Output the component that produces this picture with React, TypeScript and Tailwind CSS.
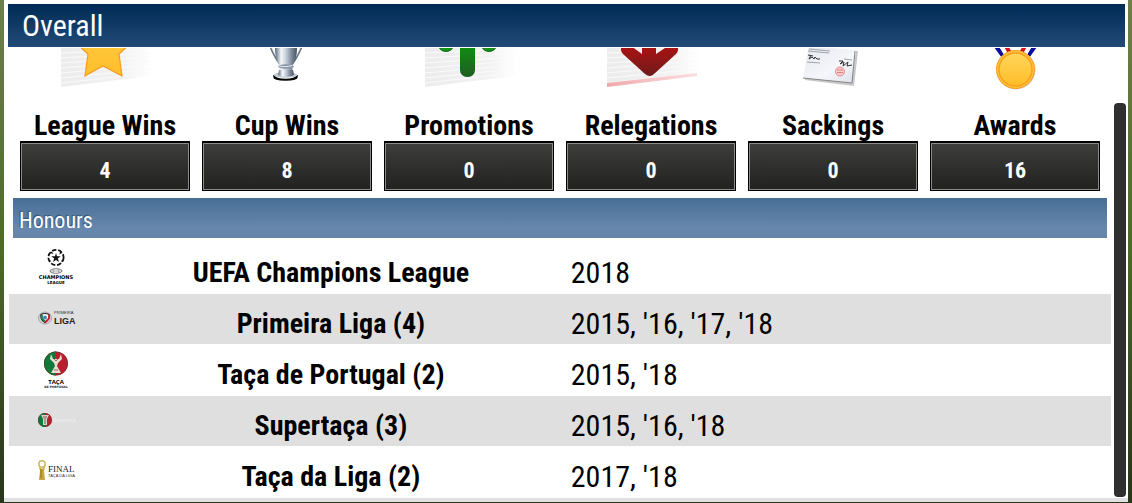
import type { ReactNode } from "react";

interface Stat {
  label: string;
  value: number;
  icon: ReactNode;
}

interface Honour {
  name: string;
  years: string;
  logo: ReactNode;
}

// Faded ruled sheet that sits behind the league icons
function Sheet() {
  return (
    <>
      <defs>
        <linearGradient id="sheet" x1="0" x2="1" y1="0" y2="0">
          <stop offset="0" stopColor="#ececec" />
          <stop offset="0.7" stopColor="#f3f2f3" />
          <stop offset="1" stopColor="#ffffff" />
        </linearGradient>
      </defs>
      <path d="M0 0H90V28L0 39Z" fill="url(#sheet)" />
      <path
        d="M0 5L90 1M0 10L90 5M0 15L90 9M0 20L90 13M0 25L90 17M0 30L90 21M0 35L90 25"
        stroke="#fafafa"
        strokeWidth="1"
      />
    </>
  );
}

function StarIcon() {
  return (
    <svg width="92" height="40" viewBox="-2 0 92 40" aria-hidden="true">
      <defs>
        <linearGradient id="star" x1="0" x2="0" y1="0" y2="1">
          <stop offset="0" stopColor="#ffd046" />
          <stop offset="1" stopColor="#ffbe2c" />
        </linearGradient>
      </defs>
      <Sheet />
      <path
        d="M42 -40L52 -15L80 -14L58 6L61 28L42 18L24 28L27 6L5 -14L32 -15Z"
        fill="url(#star)"
        stroke="#f59a23"
        strokeWidth="1.2"
      />
    </svg>
  );
}

function CupIcon() {
  return (
    <svg width="92" height="40" viewBox="0 0 92 40" aria-hidden="true">
      <defs>
        <linearGradient id="cup" x1="0" x2="1" y1="0" y2="0">
          <stop offset="0" stopColor="#596878" />
          <stop offset="0.28" stopColor="#f5f8fb" />
          <stop offset="0.5" stopColor="#c5ced8" />
          <stop offset="0.75" stopColor="#7d8b9a" />
          <stop offset="1" stopColor="#455261" />
        </linearGradient>
      </defs>
      <path d="M29 -2C32 5 34 10 39 16M61 -2C58 5 56 10 51 16" fill="none" stroke="#697683" strokeWidth="2" />
      <path d="M30 -2C33 5 35 9 39 14M60 -2C57 5 55 9 51 14" fill="none" stroke="#e3e8ed" strokeWidth="0.8" />
      <path d="M34 0H56C56 8 54 14 51 18L52 26H38L39 18C36 14 34 8 34 0Z" fill="url(#cup)" />
      <ellipse cx="45" cy="18.5" rx="8" ry="2.2" fill="#8795a6" />
      <path d="M37 17.5C41 19 46 19 51 17.5" fill="none" stroke="#e9eef3" />
      <path d="M33 27C33 33 56 33 56 27V29C56 33 33 33 33 29Z" fill="#050505" stroke="#050505" strokeWidth="1.5" />
      <ellipse cx="44.5" cy="27" rx="12" ry="2.8" fill="#c4ccd5" />
      <path d="M38 22H52L53 27C49 29 41 29 37 27Z" fill="url(#cup)" />
    </svg>
  );
}

function PromotionIcon() {
  return (
    <svg width="92" height="40" viewBox="-2 0 92 40" aria-hidden="true">
      <defs>
        <linearGradient id="up" x1="0" x2="0" y1="0" y2="1">
          <stop offset="0" stopColor="#0d9b0d" />
          <stop offset="1" stopColor="#1f5d20" />
        </linearGradient>
      </defs>
      <Sheet />
      <path d="M14 -2A7 5.500 0 0 0 28 -2ZM57 -2A7 5.500 0 0 0 71 -2Z" fill="#169216" stroke="#176b18" />
      <rect x="35" y="-10" width="15" height="39" rx="7" fill="url(#up)" />
    </svg>
  );
}

function RelegationIcon() {
  return (
    <svg width="92" height="40" viewBox="-2 0 92 40" aria-hidden="true">
      <defs>
        <linearGradient id="down" x1="0" x2="0" y1="0" y2="1">
          <stop offset="0" stopColor="#b01111" />
          <stop offset="1" stopColor="#6f1c1c" />
        </linearGradient>
        <linearGradient id="line" x1="0" x2="1" y1="0" y2="0">
          <stop offset="0" stopColor="#f0a9ac" />
          <stop offset="1" stopColor="#fbdfe1" />
        </linearGradient>
      </defs>
      <Sheet />
      <path d="M0 35L90 25V28L0 39Z" fill="url(#line)" />
      <path d="M14 -4H71V2Q71 4 69 6L47 26Q43 30 38 26L16 6Q14 4 14 2Z" fill="url(#down)" />
      <path d="M24 -2L35 6V0H30ZM61 -2L49 6V0H55Z" fill="#f4eeee" />
    </svg>
  );
}

function LetterIcon() {
  return (
    <svg width="92" height="40" viewBox="-2 0 92 40" aria-hidden="true">
      <defs>
        <linearGradient id="paper" x1="0" x2="1" y1="0" y2="1">
          <stop offset="0" stopColor="#e4e6ef" />
          <stop offset="0.6" stopColor="#f6f7fb" />
          <stop offset="1" stopColor="#dcdfe9" />
        </linearGradient>
      </defs>
      <path d="M20 0L69 3L65 38L16 32Z" fill="#9b9b9b" opacity="0.55" />
      <path d="M20 -2L67 2L63 35L14 30Z" fill="url(#paper)" />
      <path d="M66 3L63 35L14 30" fill="none" stroke="#858585" strokeWidth="1" />
      <path d="M20 1L41 3M19 3L40 5M18 14L31 15M55 11L63 12" stroke="#8d8f99" strokeWidth="0.8" />
      <path
        d="M19 7L24 8M22 7L20 11L23 9L25 11L26 9L28 11L31 11M50 13L54 13L51 16L55 14L54 18L59 14L58 18L63 17"
        fill="none"
        stroke="#333"
        strokeWidth="1"
      />
      <circle cx="51" cy="23.500" r="4.500" fill="#f7cfcf" stroke="#e58a8a" />
      <path d="M48 22H54M48 24.500H54" stroke="#e06b6b" strokeWidth="0.8" />
    </svg>
  );
}

function MedalIcon() {
  return (
    <svg width="92" height="42" viewBox="0 0 92 42" aria-hidden="true">
      <defs>
        <linearGradient id="medal" x1="0" x2="0" y1="0" y2="1">
          <stop offset="0" stopColor="#ffd65c" />
          <stop offset="1" stopColor="#ffbd27" />
        </linearGradient>
      </defs>
      <path d="M27 -2L35 9M66 -2L58 9" stroke="#0b0ba0" strokeWidth="4.500" />
      <path d="M32 -2L38 8M61 -2L55 8" stroke="#ffffff" strokeWidth="4" />
      <path d="M37 -2L42 7M56 -2L51 7" stroke="#d3121b" strokeWidth="4" />
      <circle cx="47" cy="22" r="19.500" fill="#d8d8d8" />
      <circle cx="46.500" cy="21.500" r="19" fill="#ffc53a" stroke="#f39a1f" strokeWidth="1" />
      <circle cx="46.500" cy="21.500" r="16.500" fill="url(#medal)" stroke="#f9a01f" strokeWidth="1.500" />
    </svg>
  );
}

function ChampionsLogo() {
  return (
    <svg width="40" height="38" viewBox="0 0 40 38" aria-hidden="true">
      <circle cx="20" cy="8.500" r="7.600" fill="none" stroke="#111" strokeWidth="1.800" strokeDasharray="4.500 1.800" />
      <path d="M20 4L21 7.300H24.700L21.800 9.600L23 13L20 11L17 13L18.200 9.600L15.300 7.300H19Z" fill="#111" />
      <path d="M14 4L16 2.500L17 5ZM24 2.500L26 4L23.500 5.500ZM12.500 10L15 12L13.500 13ZM27.500 10L25 12L26.500 13Z" fill="#111" />
      <ellipse cx="20" cy="22" rx="6" ry="2.300" fill="none" stroke="#444" strokeWidth="0.7" />
      <path d="M14 22H26M18 20L17 24M22 20L23 24" stroke="#777" strokeWidth="0.6" />
      <text x="20" y="30" textAnchor="middle" className="font-['DejaVu_Sans'] text-[5px] font-bold">
        CHAMPIONS
      </text>
      <text x="20" y="35" textAnchor="middle" className="font-['DejaVu_Sans'] text-[4px] font-bold">
        LEAGUE
      </text>
    </svg>
  );
}

function PrimeiraLogo() {
  return (
    <svg width="40" height="38" viewBox="0 0 40 38" aria-hidden="true">
      <ellipse cx="9" cy="18" rx="6.500" ry="6" fill="#d2d2d2" stroke="#999" strokeWidth="0.8" />
      <path d="M5 14.500Q9 12.500 13 14.500Q14 19.500 9 22.500Q4 19.500 5 14.500Z" fill="#fff" stroke="#222" strokeWidth="1.200" />
      <path d="M6 15V18.500L9 21.500" fill="none" stroke="#15884e" strokeWidth="1.800" />
      <path d="M13 14.500V18.500L9 22.500" fill="none" stroke="#cf2229" strokeWidth="1.800" />
      <circle cx="9" cy="17.500" r="2" fill="#4d83bd" />
      <text x="18" y="14" className="fill-[#333] font-['Liberation_Sans'] text-[4px]">
        PRIMEIRA
      </text>
      <text x="18" y="24" className="fill-[#222] font-['Liberation_Sans'] text-[9px] font-bold">
        LIGA
      </text>
    </svg>
  );
}

function CrestBall({ cx, cy, r }: { cx: number; cy: number; r: number }) {
  return (
    <>
      <circle cx={cx} cy={cy} r={r} fill="#b91f2c" />
      <path d={`M${cx} ${cy - r}A${r} ${r} 0 0 0 ${cx} ${cy + r}Z`} fill="#127a38" />
      <circle cx={cx} cy={cy} r={r - 0.5} fill="none" stroke="#4b3b30" strokeOpacity="0.45" />
    </>
  );
}

function TacaLogo() {
  return (
    <svg width="40" height="38" viewBox="0 0 40 38" aria-hidden="true">
      <CrestBall cx={20} cy={12.5} r={12} />
      <path d="M15 3L17 8H23L25 3L26 8L22 12L21 15L25 22H15L19 15L18 12L14 8Z" fill="#e6ddd3" />
      <path d="M18 8L20 10L22 8M18 19H22" fill="none" stroke="#875a48" strokeWidth="0.8" />
      <text x="20" y="33" textAnchor="middle" className="font-['Open_Sans'] text-[6px] font-bold">
        TAÇA
      </text>
      <text x="20" y="37" textAnchor="middle" className="fill-[#222] font-['DejaVu_Sans'] text-[3px] font-bold">
        DE PORTUGAL
      </text>
    </svg>
  );
}

function SupertacaLogo() {
  return (
    <svg width="40" height="38" viewBox="0 0 40 38" aria-hidden="true">
      <CrestBall cx={9} cy={18} r={7} />
      <path d="M5 13H13L11 17L11 23H7L7 17Z" fill="#d8d0cb" />
      <path d="M7 15H11M9 16V22" stroke="#5c4940" strokeWidth="0.8" />
      <text x="17" y="20" className="fill-[#f1eded] font-['Liberation_Sans'] text-[5px]">
        Supertaça
      </text>
    </svg>
  );
}

function TacaDaLigaLogo() {
  return (
    <svg width="40" height="38" viewBox="0 0 40 38" aria-hidden="true">
      <circle cx="6" cy="11" r="3.200" fill="none" stroke="#cdbb62" strokeWidth="1.500" />
      <path d="M3 14L4 18L3 27H9L8 18L9 13L6 16Z" fill="#c5a63a" />
      <path d="M5 16V25" stroke="#7d6824" strokeWidth="0.8" />
      <text x="12" y="19" className="fill-[#222] font-['Liberation_Serif'] text-[9px]">
        FINAL
      </text>
      <text x="12" y="24" className="fill-[#333] font-['Liberation_Sans'] text-[4px]">
        TAÇA DA LIGA
      </text>
    </svg>
  );
}

const stats: Stat[] = [
  { label: "League Wins", value: 4, icon: <StarIcon /> },
  { label: "Cup Wins", value: 8, icon: <CupIcon /> },
  { label: "Promotions", value: 0, icon: <PromotionIcon /> },
  { label: "Relegations", value: 0, icon: <RelegationIcon /> },
  { label: "Sackings", value: 0, icon: <LetterIcon /> },
  { label: "Awards", value: 16, icon: <MedalIcon /> },
];

const honours: Honour[] = [
  { name: "UEFA Champions League", years: "2018", logo: <ChampionsLogo /> },
  { name: "Primeira Liga (4)", years: "2015, '16, '17, '18", logo: <PrimeiraLogo /> },
  { name: "Taça de Portugal (2)", years: "2015, '18", logo: <TacaLogo /> },
  { name: "Supertaça (3)", years: "2015, '16, '18", logo: <SupertacaLogo /> },
  { name: "Taça da Liga (2)", years: "2017, '18", logo: <TacaDaLigaLogo /> },
];

function StatCard({ label, value, icon }: Stat) {
  return (
    <div className="flex min-w-0 flex-1 flex-col items-center">
      <div className="flex h-[61px] items-start">{icon}</div>
      <h2 className="pt-px text-[28px] leading-[31px] font-bold whitespace-nowrap">{label}</h2>
      <div className="w-full border border-t-2 border-black">
        <div className="flex h-[47px] items-center justify-center border border-[#8a8a8a] bg-linear-to-b from-[#3d3d3c] to-[#222221] pt-2 text-[22px] font-bold text-white">
          {value}
        </div>
      </div>
    </div>
  );
}

export default function App() {
  return (
    <div className="min-h-screen bg-linear-to-b from-[#6d7f4b] via-[#4c6a29] to-[#28351a] px-1 pb-px font-['Roboto_Condensed','Roboto',sans-serif] text-black">
      <main className="border-b-4 border-[#e2e1e2] bg-white pt-1">
        <header className="mr-[3px] ml-1 flex h-[43px] items-center bg-linear-to-b from-[#002b55] to-[#224b77] px-[14px]">
          <h1 className="pt-px text-[30px] leading-8 text-white">Overall</h1>
        </header>

        <div className="mt-px mr-[2px] ml-[5px] flex gap-[3px]">
          <div className="min-w-0 flex-1">
            <section className="flex gap-3 px-[11px]">
              {stats.map((stat) => (
                <StatCard key={stat.label} {...stat} />
              ))}
            </section>

            <h2 className="mx-1 mt-[7px] flex h-10 items-center bg-linear-to-b from-[#486e96] via-[#6787ad] via-75% to-[#6684a6] px-[6px] pt-1 text-[22px] text-white [text-shadow:-1px_-1px_1px_#35516f]">
              Honours
            </h2>

            <table className="mt-1 w-full border-separate border-spacing-x-0 border-spacing-y-px">
              <tbody>
                {honours.map((honour) => (
                  <tr key={honour.name} className="h-[50px] even:bg-[#dfdfdf]">
                    <td className="w-[94px] p-0">
                      <div className="flex justify-center">{honour.logo}</div>
                    </td>
                    <th scope="row" className="w-[41%] p-0 pt-[10px] pl-1 text-center text-[28px] leading-8 font-bold">
                      {honour.name}
                    </th>
                    <td className="p-0 pt-[10px] pl-4 text-[30px] leading-8">{honour.years}</td>
                  </tr>
                ))}
              </tbody>
            </table>
          </div>

          <div className="mt-[55px] mb-px w-3 rounded bg-[#2f2f2f]" />
        </div>
      </main>
    </div>
  );
}
